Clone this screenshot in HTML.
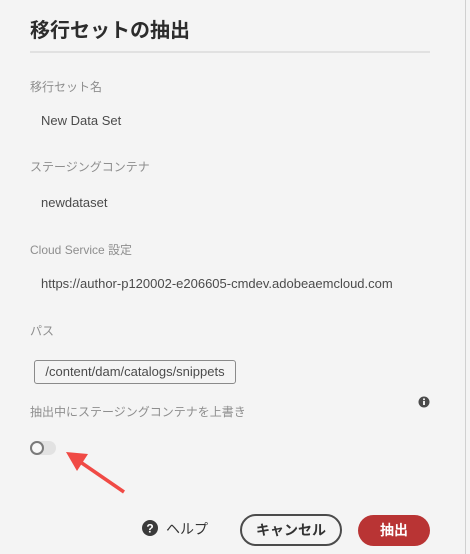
<!DOCTYPE html>
<html><head><meta charset="utf-8"><style>
body{margin:0;width:470px;height:554px;background:#f4f4f4;position:relative;overflow:hidden;font-family:"Liberation Sans","Noto Sans CJK JP",sans-serif}
.a{position:absolute;white-space:nowrap}
.l{font-size:12px;color:#8e8e8e}
.v{font-size:13px;color:#4b4b4b}
</style></head><body>
<div class="a" style="left:465px;top:0;width:1px;height:554px;background:#d0d0d0"></div>
<div class="a" style="left:30px;top:14px;font-size:20px;font-weight:bold;color:#2c2c2c">移行セットの抽出</div>
<div class="a" style="left:30px;top:51px;width:400px;height:2px;background:#e1e1e1"></div>
<div class="a l" style="left:30px;top:78px">移行セット名</div>
<div class="a v" style="left:41px;top:113px">New Data Set</div>
<div class="a l" style="left:30px;top:158px">ステージングコンテナ</div>
<div class="a v" style="left:41px;top:195px">newdataset</div>
<div class="a l" style="left:30px;top:241px">Cloud Service 設定</div>
<div class="a v" style="left:41px;top:276px">https://author-p120002-e206605-cmdev.adobeaemcloud.com</div>
<div class="a l" style="left:30px;top:322px">パス</div>
<div class="a v" style="left:34px;top:360px;width:200px;height:22px;border:1px solid #8a8a8a;border-radius:3px;line-height:22px;text-align:center">/content/dam/catalogs/snippets</div>
<div class="a l" style="left:30px;top:403px">抽出中にステージングコンテナを上書き</div>
<svg class="a" style="left:418px;top:396px" width="12" height="12" viewBox="0 0 12 12"><circle cx="6" cy="6" r="5.5" fill="#4b4b4b"/><rect x="5.1" y="5" width="1.8" height="4" fill="#fff"/><circle cx="6" cy="3.3" r="1" fill="#fff"/></svg>
<div class="a" style="left:30px;top:441px;width:26px;height:14px;border-radius:7px;background:#e2e2e2"></div>
<div class="a" style="left:30px;top:441px;width:10px;height:10px;border-radius:50%;border:2px solid #7a7a7a;background:#f8f8f8"></div>
<svg class="a" style="left:0;top:0" width="470" height="554"><line x1="124" y1="492" x2="76" y2="459" stroke="#f04a45" stroke-width="3.5"/><polygon points="66,452 88,454 77,471" fill="#f04a45"/></svg>
<svg class="a" style="left:142px;top:520px" width="16" height="16" viewBox="0 0 16 16"><circle cx="8" cy="8" r="8" fill="#3a3a3a"/><text x="8" y="12.5" font-size="12" font-weight="bold" fill="#fff" text-anchor="middle" font-family="Liberation Sans">?</text></svg>
<div class="a" style="left:166px;top:519px;font-size:14px;color:#333">ヘルプ</div>
<div class="a" style="left:240px;top:514px;width:98px;height:28px;border:2px solid #4b4b4b;border-radius:16px;font-size:14px;font-weight:bold;color:#333;text-align:center;line-height:28px">キャンセル</div>
<div class="a" style="left:358px;top:515px;width:72px;height:31px;border-radius:16px;background:#b93434;font-size:14px;font-weight:bold;color:#fff;text-align:center;line-height:31px">抽出</div>
</body></html>
